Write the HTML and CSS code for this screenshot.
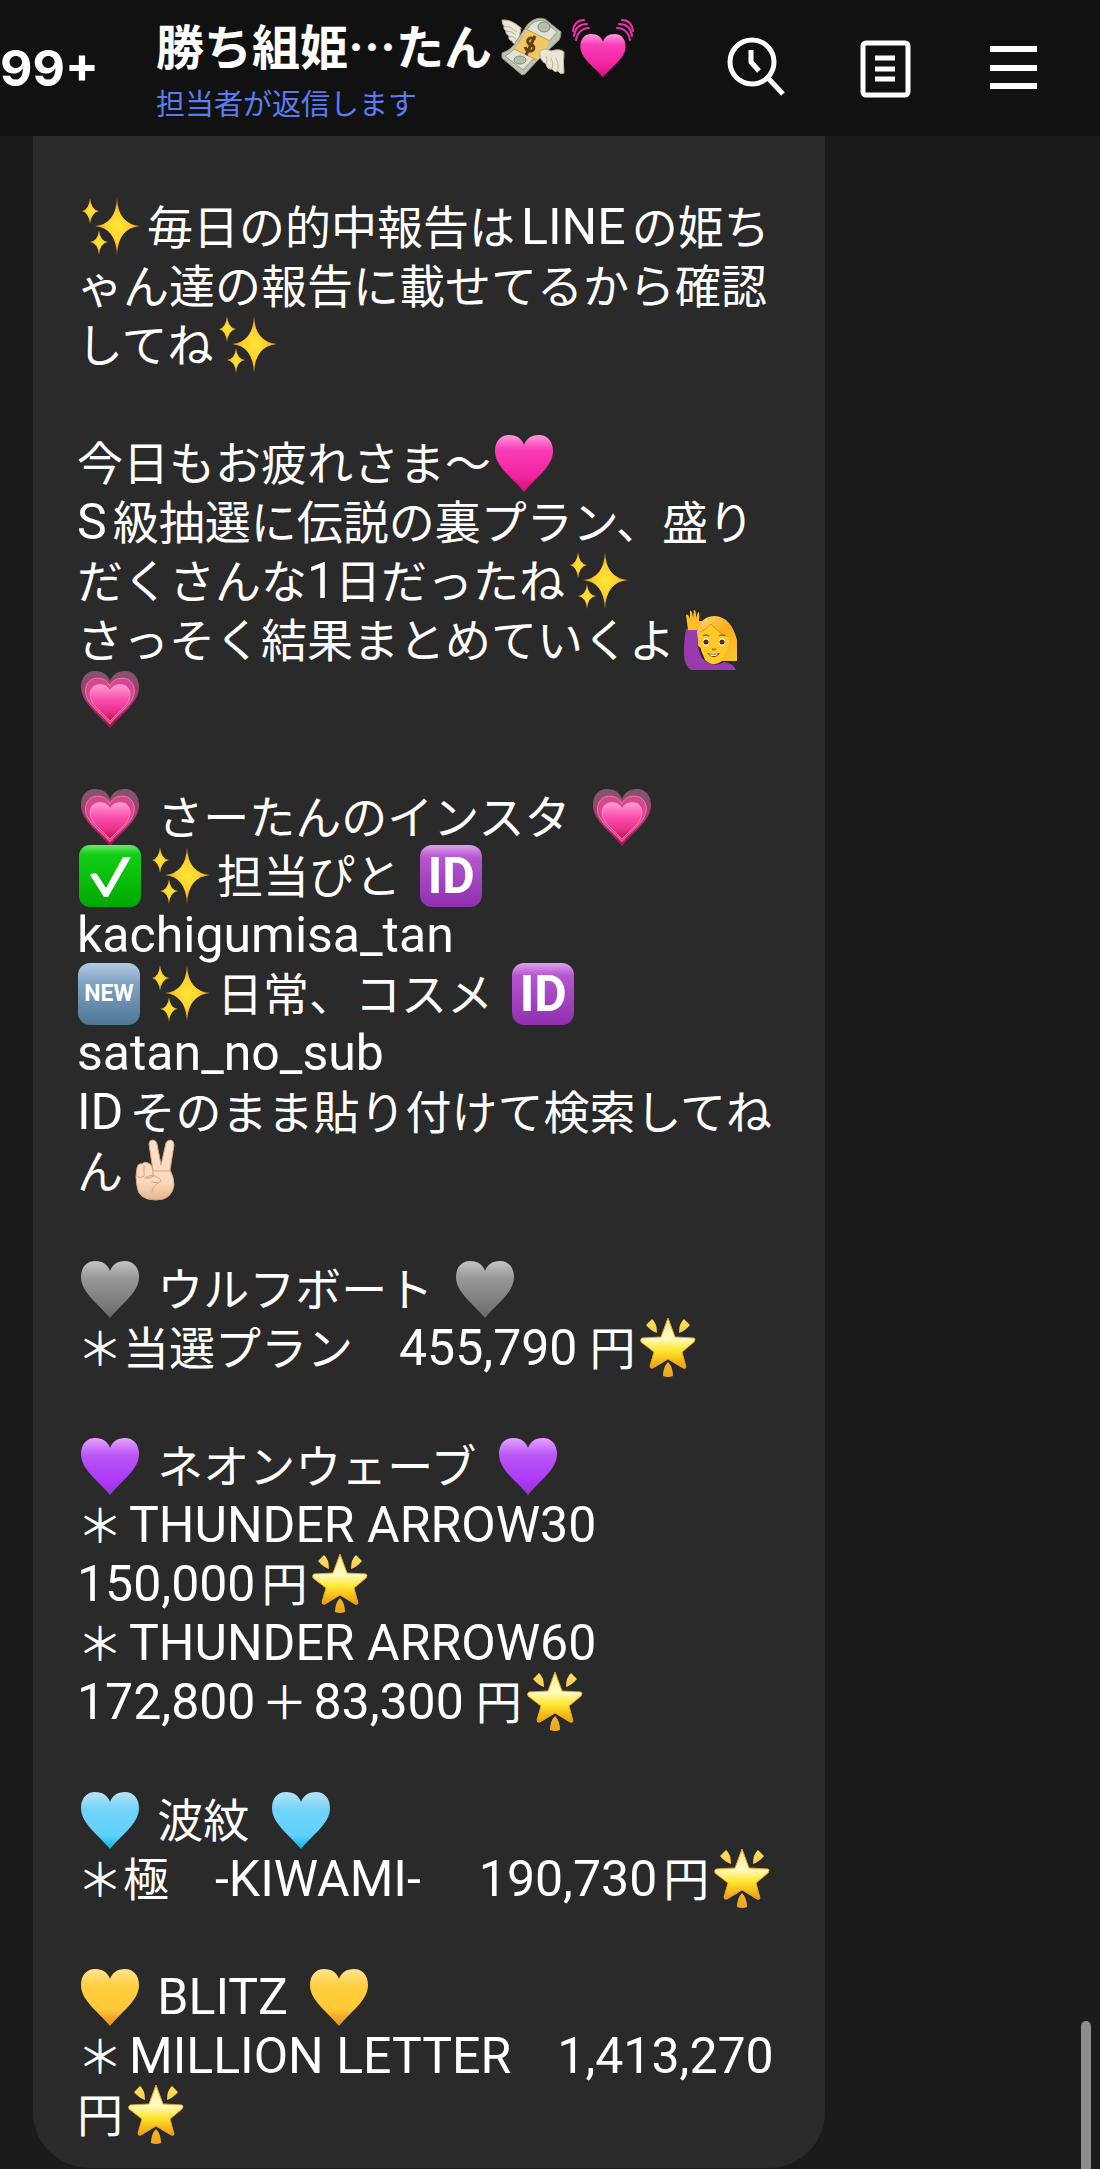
FILE: index.html
```html
<!DOCTYPE html>
<html lang="ja">
  <head>
    <meta charset="utf-8" />
    <meta name="viewport" content="width=device-width, initial-scale=1" />
    <title>勝ち組姫…たん</title>
    <link rel="stylesheet" href="styles.css">
  </head>

  <body>
    <!-- emoji sprite -->
    <svg class="sprite" aria-hidden="true">
      <defs>
        <path id="heart-shape" d="M32 61C21 47 3 36 3 20C3 10 9 4 17 4C25 4 30 8 32 14C34 8 39 4 47 4C55 4 61 10 61 20C61 36 43 47 32 61Z" />
        <linearGradient id="pink" x1="0" y1="0" x2="0" y2="1">
          <stop offset="0" stop-color="#ff9bdc" />
          <stop offset=".25" stop-color="#fb3db9" />
          <stop offset=".7" stop-color="#f0269f" />
          <stop offset="1" stop-color="#d30f78" />
        </linearGradient>
        <linearGradient id="rose" x1="0" y1="0" x2="0" y2="1">
          <stop offset="0" stop-color="#ff9ed0" />
          <stop offset=".4" stop-color="#fb4fae" />
          <stop offset=".75" stop-color="#ea2f8a" />
          <stop offset="1" stop-color="#b80d4c" />
        </linearGradient>
        <linearGradient id="rose-back" x1="0" y1="0" x2="0" y2="1">
          <stop offset="0" stop-color="#80566c" />
          <stop offset=".5" stop-color="#b23571" />
          <stop offset="1" stop-color="#b80d4c" />
        </linearGradient>
        <linearGradient id="gray" x1="0" y1="0" x2="0" y2="1">
          <stop offset="0" stop-color="#c4c4c4" />
          <stop offset=".3" stop-color="#989898" />
          <stop offset="1" stop-color="#6b6b6b" />
        </linearGradient>
        <linearGradient id="purple" x1="0" y1="0" x2="0" y2="1">
          <stop offset="0" stop-color="#e6a4ff" />
          <stop offset=".3" stop-color="#b957f6" />
          <stop offset=".75" stop-color="#ae37fb" />
          <stop offset="1" stop-color="#8d3cc4" />
        </linearGradient>
        <linearGradient id="blue" x1="0" y1="0" x2="0" y2="1">
          <stop offset="0" stop-color="#b7e4f5" />
          <stop offset=".3" stop-color="#74d3f7" />
          <stop offset=".75" stop-color="#5fd2fd" />
          <stop offset="1" stop-color="#10b4e0" />
        </linearGradient>
        <linearGradient id="yellow" x1="0" y1="0" x2="0" y2="1">
          <stop offset="0" stop-color="#ffe48f" />
          <stop offset=".3" stop-color="#ffcf3f" />
          <stop offset=".7" stop-color="#ffc93a" />
          <stop offset="1" stop-color="#e88a1c" />
        </linearGradient>
        <linearGradient id="green" x1="0" y1="0" x2="0" y2="1">
          <stop offset="0" stop-color="#6ee86e" />
          <stop offset=".15" stop-color="#12cf16" />
          <stop offset="1" stop-color="#00a800" />
        </linearGradient>
        <linearGradient id="star-fill" x1="0" y1="0" x2="0" y2="1">
          <stop offset="0" stop-color="#ffe98a" />
          <stop offset=".4" stop-color="#fffcc4" />
          <stop offset=".65" stop-color="#ffe62e" />
          <stop offset="1" stop-color="#eb9a10" />
        </linearGradient>
        <linearGradient id="ray-fill" x1="0" y1="0" x2="0" y2="1">
          <stop offset="0" stop-color="#ffdc5c" />
          <stop offset="1" stop-color="#eda61e" />
        </linearGradient>
        <radialGradient id="spark-fill">
          <stop offset="0" stop-color="#ffe638" />
          <stop offset=".5" stop-color="#ffd02e" />
          <stop offset="1" stop-color="#e8962a" />
        </radialGradient>
        <linearGradient id="hair" x1="0" y1="0" x2="1" y2="1">
          <stop offset="0" stop-color="#ffd873" />
          <stop offset=".5" stop-color="#f8ae1e" />
          <stop offset="1" stop-color="#fac62b" />
        </linearGradient>
        <linearGradient id="skin" x1="0" y1="0" x2="0" y2="1">
          <stop offset="0" stop-color="#fbe3c8" />
          <stop offset=".7" stop-color="#fad9bb" />
          <stop offset="1" stop-color="#e5b48e" />
        </linearGradient>
      </defs>

      <symbol id="sparkles" viewBox="0 0 64 64">
        <path fill="url(#spark-fill)" d="M39 3Q40 29 62 31Q40 33 39 60Q38 33 17 31Q38 29 39 3Z" />
        <path fill="url(#spark-fill)" d="M12 3Q13 15 21 16Q13 18 12 29Q11 18 4 16Q11 15 12 3Z" />
        <path fill="url(#spark-fill)" d="M21 35Q22 46 30 47Q22 48 21 60Q20 48 12 47Q20 46 21 35Z" />
      </symbol>
      <symbol id="heart-pink" viewBox="0 0 64 64"><use href="#heart-shape" fill="url(#pink)" /></symbol>
      <symbol id="heart-gray" viewBox="0 0 64 64"><use href="#heart-shape" fill="url(#gray)" /></symbol>
      <symbol id="heart-purple" viewBox="0 0 64 64"><use href="#heart-shape" fill="url(#purple)" /></symbol>
      <symbol id="heart-blue" viewBox="0 0 64 64"><use href="#heart-shape" fill="url(#blue)" /></symbol>
      <symbol id="heart-yellow" viewBox="0 0 64 64"><use href="#heart-shape" fill="url(#yellow)" /></symbol>
      <symbol id="heart-growing" viewBox="0 0 64 64">
        <use href="#heart-shape" fill="url(#rose-back)" />
        <use href="#heart-shape" fill="#d9458f" stroke="#f08cc0" stroke-width="1" transform="translate(5 8) scale(.84 .8)" />
        <use href="#heart-shape" fill="url(#rose)" stroke="#ff9bd0" stroke-width="1" transform="translate(10 15) scale(.69 .64)" />
      </symbol>
      <symbol id="heart-beating" viewBox="0 0 64 64">
        <use href="#heart-shape" fill="url(#pink)" transform="translate(7 16) scale(.78 .76)" />
        <g fill="none" stroke="#f32da8" stroke-width="2" stroke-linecap="round">
          <path d="M2 16C3 9 7 5 13 5M62 16C61 9 57 5 51 5" />
          <path d="M3 21C4 13 9 9 16 9M61 21C60 13 55 9 48 9" />
          <path d="M5 25C6 18 11 13 18 13M59 25C58 18 53 13 46 13" />
        </g>
      </symbol>
      <symbol id="money" viewBox="0 0 64 64">
        <path fill="#e9e6d3" stroke="#b9b49c" d="M20 13Q10 4 1 5Q1 9 3 11Q2 14 5 16Q4 19 8 21Q7 25 11 26Q12 30 17 28Z" />
        <path fill="none" stroke="#b9b49c" d="M3 11Q10 11 16 17M5 16Q11 16 15 20M8 21Q12 21 15 24" />
        <path fill="#bfc4b2" stroke="#8d9282" d="M27 9Q35 1 44 4L60 17Q60 22 58 25L36 46L24 59L21 60L1 43L1 38Q11 35 16 25Z" />
        <path fill="#e0e3d4" stroke="#969b8a" d="M29 10Q36 4 43 6L56 17L36 40L22 55L4 41Q14 36 19 26Z" />
        <ellipse cx="43" cy="12" rx="6" ry="5" fill="#b7bda9" stroke="#858b78" />
        <ellipse cx="19" cy="45" rx="6" ry="4" fill="#b7bda9" stroke="#858b78" />
        <path fill="#f2c766" d="M25 14L49 26Q45 35 36 45L13 34Q21 25 25 14Z" />
        <path fill="none" stroke="#ca9637" d="M25 14L49 26M13 34L36 45" />
        <path fill="none" stroke="#61430d" stroke-width="3" d="M34 25C30 20 24 25 28 29C35 30 34 37 28 36Q25 35 24 32M34 21L25 40" />
        <path fill="#e9e6d3" stroke="#b9b49c" d="M39 37Q42 32 50 36Q59 33 63 37Q62 47 63 58Q59 60 57 56Q53 58 51 54Q46 55 45 49Q38 45 39 37Z" />
        <path fill="none" stroke="#b9b49c" d="M57 56Q58 48 55 43M51 54Q53 48 50 43M45 49Q47 45 45 41" />
      </symbol>
      <symbol id="woman" viewBox="0 0 64 64">
        <path fill="url(#hair)" d="M21 23Q25 8 39 8Q55 9 61 32V53H44L22 38Z" />
        <path fill="#ffca28" d="M24 24Q31 21 35 16Q42 25 53 29Q54 43 44 51Q37 56 30 50Q22 43 24 24Z" />
        <path fill="none" stroke="#e19417" stroke-width="1" d="M24 24Q31 21 35 16Q42 25 53 29" />
        <path fill="#993bae" d="M10 21L21 22Q20 39 26 50Q37 61 48 54Q57 55 60 62H15Q8 58 8 45Q8 31 10 21Z" />
        <path fill="#ffca28" d="M26 44Q38 58 50 44L46 53Q38 60 29 52Z" />
        <path fill="#fdbf25" d="M12 22L11 14L10 7Q12 5 14 11L14 3Q16 1 17 10L18 2Q20 1 20 10L22 4Q24 4 23 13L26 13Q26 17 21 22Z" />
        <ellipse cx="30" cy="34" rx="3" ry="4" fill="#fff" />
        <ellipse cx="46" cy="34" rx="3" ry="4" fill="#fff" />
        <circle cx="30" cy="34" r="2.5" fill="#51300b" />
        <circle cx="46" cy="34" r="2.5" fill="#51300b" />
        <path fill="none" stroke="#a76a11" stroke-width="1.5" d="M27 28Q30 26 33 28M43 28Q46 26 49 28M36 41Q38 42 40 41" />
        <path fill="#6b2d12" d="M31 45Q37 47 44 45Q38 53 31 45Z" />
        <path fill="#fff" d="M33 46Q37 47 42 46L40 48H35Z" />
      </symbol>
      <symbol id="victory" viewBox="0 0 64 64">
        <path fill="url(#skin)" stroke="#d8a782" stroke-width="1" d="M29 32L25 5Q25 1 29 1Q32 1 33 5L37 26L42 4Q43 1 47 1Q50 2 50 6L46 31Q50 38 50 46Q48 61 32 61Q14 61 13 47Q11 38 13 29Q14 24 18 25Q20 22 24 24Q28 25 29 32Z" />
        <path fill="none" stroke="#d7a27c" stroke-width="1" stroke-linecap="round" d="M20 26V37Q16 40 13 37M29 30V37Q25 41 21 38M21 39Q28 34 35 39Q39 42 34 44L28 43M34 44Q28 48 28 53M29 32H45" />
      </symbol>
      <symbol id="star" viewBox="0 0 64 64">
        <path fill="url(#star-fill)" stroke="#e9a42b" stroke-width="1" stroke-linejoin="round" d="M32 2L39 21L58 22Q60 23 58 26L46 36L50 51Q50 53 47 52L32 43L17 52Q14 53 14 50L18 36L5 26Q4 23 6 22L25 21Z" />
        <path fill="url(#ray-fill)" d="M16 3Q21 7 21 17Q15 15 10 9ZM48 3Q43 7 43 17Q49 15 54 9ZM32 46Q37 51 37 60Q32 62 27 60Q27 51 32 46Z" />
      </symbol>
      <symbol id="check" viewBox="0 0 64 64">
        <rect x="1" y="1" width="62" height="62" rx="11" fill="url(#green)" />
        <path fill="#fff" d="M12 31Q15 28 19 30L28 44L45 13H53L30 53H26Z" />
      </symbol>
    </svg>

    <header class="header">
      <a href="#" class="back">99+</a>
      <div class="account">
        <h1 class="name">勝ち組姫…たん<svg class="emoji gap-l"><use href="#money" /></svg><svg class="emoji"><use href="#heart-beating" /></svg></h1>
        <p class="status">担当者が返信します</p>
      </div>
      <div class="actions">
        <button class="action" aria-label="検索">
          <svg viewBox="0 0 64 64"><circle cx="28" cy="26" r="22" /><path d="M43 41L59 58M27 14V26L35 35" /></svg>
        </button>
        <button class="action" aria-label="ノート">
          <svg viewBox="0 0 64 64"><rect x="10" y="7" width="45" height="52" rx="3" /><path d="M22 22H42M22 33H42M22 43H42" /></svg>
        </button>
        <button class="action" aria-label="メニュー">
          <svg viewBox="0 0 64 64"><path class="bars" d="M8 13H55M8 32H55M8 50H55" /></svg>
        </button>
      </div>
    </header>

    <main class="chat">
      <article class="bubble">
        <p>
          <svg class="emoji"><use href="#sparkles" /></svg>毎日の的中報告は<span class="en gap-l gap-r">LINE</span>の姫ち<br />
          ゃん達の報告に載せてるから確認<br />
          してね<svg class="emoji"><use href="#sparkles" /></svg>
        </p>
        <p>
          今日もお疲れさま〜<svg class="emoji"><use href="#heart-pink" /></svg><br />
          <span class="en gap-r">S</span>級抽選に伝説の裏プラン、盛り<br />
          だくさんな<span class="en">1</span>日だったね<svg class="emoji"><use href="#sparkles" /></svg><br />
          さっそく結果まとめていくよ<svg class="emoji"><use href="#woman" /></svg><br />
          <svg class="emoji"><use href="#heart-growing" /></svg>
        </p>
        <p>
          <svg class="emoji"><use href="#heart-growing" /></svg> さーたんのインスタ <svg class="emoji gap-l"><use href="#heart-growing" /></svg><br />
          <svg class="emoji"><use href="#check" /></svg><svg class="emoji"><use href="#sparkles" /></svg>担当ぴと <span class="emoji badge badge-id">ID</span><br />
          <span class="en">kachigumisa_tan</span><br />
          <span class="emoji badge badge-new">NEW</span><svg class="emoji"><use href="#sparkles" /></svg>日常、コスメ <span class="emoji badge badge-id">ID</span><br />
          <span class="en">satan_no_sub</span><br />
          <span class="en gap-r">ID</span>そのまま貼り付けて検索してね<br />
          ん<svg class="emoji"><use href="#victory" /></svg>
        </p>
        <p>
          <svg class="emoji"><use href="#heart-gray" /></svg> ウルフボート <svg class="emoji gap-l"><use href="#heart-gray" /></svg><br />
          ＊当選プラン　<span class="en amount">455,790</span>円<svg class="emoji"><use href="#star" /></svg>
        </p>
        <p>
          <svg class="emoji"><use href="#heart-purple" /></svg> ネオンウェーブ <svg class="emoji gap-l"><use href="#heart-purple" /></svg><br />
          ＊<span class="en gap-l">THUNDER ARROW30</span><br />
          <span class="en gap-r">150,000</span>円<svg class="emoji"><use href="#star" /></svg><br />
          ＊<span class="en gap-l">THUNDER ARROW60</span><br />
          <span class="en gap-r">172,800</span>＋<span class="en gap-l amount">83,300</span>円<svg class="emoji"><use href="#star" /></svg>
        </p>
        <p>
          <svg class="emoji"><use href="#heart-blue" /></svg> 波紋 <svg class="emoji gap-l"><use href="#heart-blue" /></svg><br />
          ＊極　<span class="en amount">-KIWAMI-</span>　<span class="en gap-r">190,730</span>円<svg class="emoji"><use href="#star" /></svg>
        </p>
        <p>
          <svg class="emoji"><use href="#heart-yellow" /></svg> <span class="en">BLITZ</span> <svg class="emoji gap-l"><use href="#heart-yellow" /></svg><br />
          ＊<span class="en gap-l">MILLION LETTER</span>　<span class="en">1,413,270</span><br />
          円<svg class="emoji"><use href="#star" /></svg>
        </p>
      </article>
      <div class="scroll-thumb"></div>
    </main>
  </body>
</html>
```
FILE: styles.css
```css
* {
  box-sizing: border-box;
}

body {
  display: flex;
  flex-direction: column;
  min-height: 100vh;
  margin: 0;
  background: #1b1b1b;
  color: #fff;
  font-family: "Noto Sans CJK JP", sans-serif;
}

h1,
p {
  margin: 0;
}

.sprite {
  position: absolute;
  width: 0;
  height: 0;
}

/* header */

.header {
  display: flex;
  align-items: center;
  height: 136px;
  padding-right: 54px;
  background: #111;
}

.back {
  display: flex;
  justify-content: flex-end;
  width: 99px;
  color: #fff;
  font: 700 50px/64px Inter, sans-serif;
  text-decoration: none;
}

.account {
  flex: 1;
  margin-left: 57px;
  white-space: nowrap;
}

.name {
  margin-bottom: 4px;
  font-size: 48px;
  font-weight: 700;
  line-height: 64px;
}

.status {
  color: #5c7cee;
  font-size: 29px;
  line-height: 44px;
}

.actions {
  display: flex;
  gap: 65px;
}

.action {
  width: 64px;
  height: 64px;
  padding: 0;
  border: none;
  background: none;
  cursor: pointer;
}

.action svg {
  display: block;
  fill: none;
  stroke: #fff;
  stroke-width: 5px;
}

.action .bars {
  stroke-width: 6px;
}

/* messages */

.chat {
  position: relative;
  flex: 1;
}

.bubble {
  display: flex;
  flex-direction: column;
  gap: 59px;
  margin: 0 25% 0 3%;
  padding: 59px 0 26px 44px;
  border-radius: 0 0 56px 56px;
  background: #2a2a2a;
  font-size: 46px;
  line-height: 59px;
  white-space: nowrap;
}

.en {
  font-family: Roboto, sans-serif;
  font-size: 50px;
  line-height: 1;
}

.gap-l {
  margin-left: 6px;
}

.gap-r {
  margin-right: 6px;
}

.amount {
  margin-right: 12px;
}

/* the negative margins keep the tall emoji from stretching the line */
.emoji {
  width: 64px;
  height: 64px;
  margin: -21px 5px -11px 1px;
  vertical-align: middle;
}

.emoji.gap-l {
  margin-left: 9px;
}

.badge {
  display: inline-flex;
  align-items: center;
  justify-content: center;
  width: 62px;
  height: 62px;
  border-radius: 12px;
  font-family: Roboto, sans-serif;
  font-weight: 700;
  line-height: 1;
}

.badge-id {
  margin-left: 9px;
  background: linear-gradient(#dfa0f0, #b457cf 20%, #8f2fae);
  font-size: 50px;
}

.badge-new {
  margin-right: 7px;
  background: linear-gradient(#b4cbe2, #83a5c4 30%, #4e7695);
  font-size: 23px;
}

.scroll-thumb {
  position: absolute;
  right: 9px;
  bottom: 0;
  width: 10px;
  height: 148px;
  border-radius: 5px 5px 0 0;
  background: #8d8d8d;
}
```
